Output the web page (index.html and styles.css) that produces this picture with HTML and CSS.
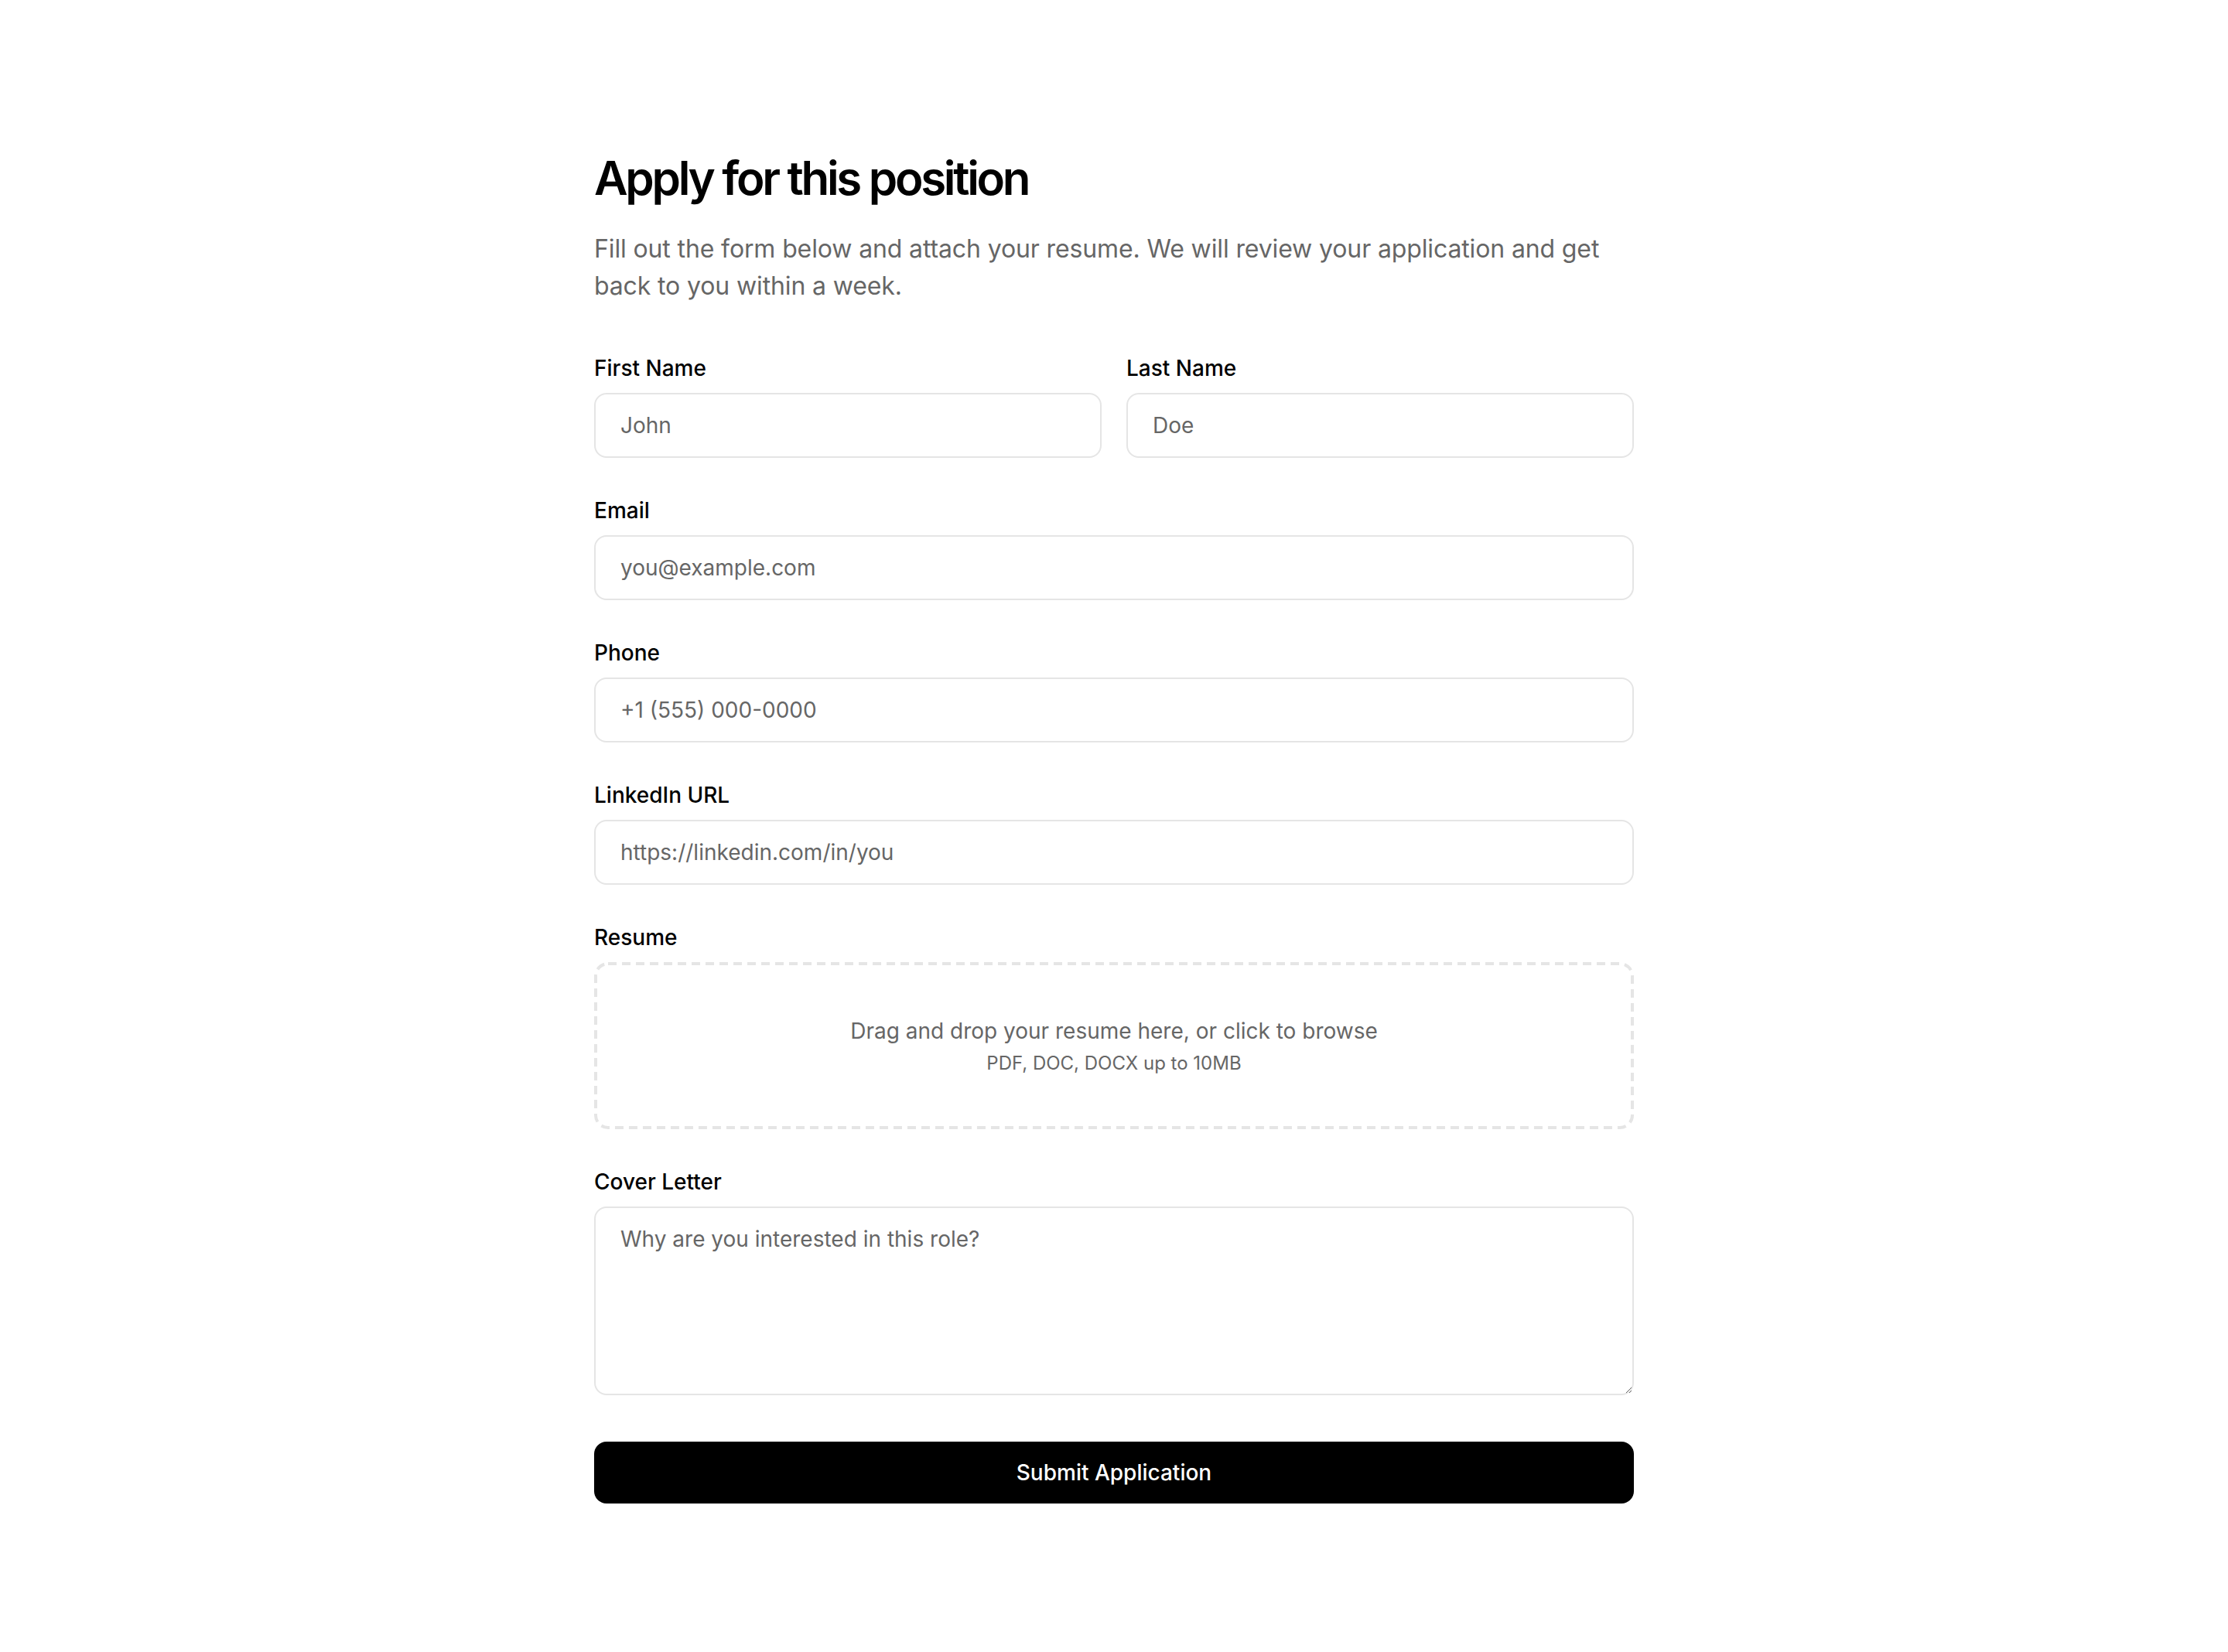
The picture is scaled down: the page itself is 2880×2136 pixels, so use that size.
FILE: index.html
```html
<!DOCTYPE html>
<html lang="en">
<head>
  <meta charset="UTF-8" />
  <meta name="viewport" content="width=device-width, initial-scale=1.0" />
  <title>Apply for this position</title>
  <link rel="stylesheet" href="styles.css">
</head>
<body>
  <div class="container">
    <h1>Apply for this position</h1>
    <p class="description">Fill out the form below and attach your resume. We will review your application and get back to you within a week.</p>

    <form class="apply-form">
      <div class="row">
        <div class="field">
          <label for="firstName">First Name</label>
          <input type="text" id="firstName" placeholder="John" />
        </div>
        <div class="field">
          <label for="lastName">Last Name</label>
          <input type="text" id="lastName" placeholder="Doe" />
        </div>
      </div>

      <div class="field">
        <label for="email">Email</label>
        <input type="email" id="email" placeholder="you@example.com" />
      </div>

      <div class="field">
        <label for="phone">Phone</label>
        <input type="tel" id="phone" placeholder="+1 (555) 000-0000" />
      </div>

      <div class="field">
        <label for="linkedin">LinkedIn URL</label>
        <input type="url" id="linkedin" placeholder="https://linkedin.com/in/you" />
      </div>

      <div class="field">
        <label>Resume</label>
        <div class="dropzone">
          <svg class="dash" width="100%" height="100%" aria-hidden="true">
            <rect x="2" y="2" width="calc(100% - 4px)" height="calc(100% - 4px)" rx="16" ry="16" />
          </svg>
          <p class="drop-main">Drag and drop your resume here, or click to browse</p>
          <p class="drop-hint">PDF, DOC, DOCX up to 10MB</p>
        </div>
      </div>

      <div class="field">
        <label for="cover">Cover Letter</label>
        <textarea id="cover" rows="5" placeholder="Why are you interested in this role?"></textarea>
      </div>

      <button type="submit">Submit Application</button>
    </form>
  </div>
</body>
</html>
```

FILE: styles.css
```css
body {
  margin: 0;
  background: #fff;
  font-family: 'Inter', 'Noto Sans', sans-serif;
  color: #000;
}
.container {
  width: 1344px;
  margin: 0 auto;
  padding: 194px 0 160px;
}
h1 {
  font-size: 60px;
  line-height: 72px;
  font-weight: 600;
  letter-spacing: -0.055em;
  margin: 0 0 32px;
}
p.description {
  font-size: 32px;
  line-height: 48px;
  letter-spacing: -0.004em;
  color: #666;
  margin: 0 0 62px;
}
.apply-form {
  display: flex;
  flex-direction: column;
  gap: 48px;
}
.row {
  display: grid;
  grid-template-columns: 1fr 1fr;
  gap: 32px;
}
.field {
  display: flex;
  flex-direction: column;
}
label {
  font-size: 28px;
  line-height: 40px;
  font-weight: 500;
  margin-bottom: 12px;
}
input,
textarea {
  font-family: inherit;
  font-size: 28px;
  line-height: 40px;
  color: #000;
  padding: 20px 32px;
  border: 2px solid #e5e5e5;
  border-radius: 16px;
  background: #fff;
  outline: none;
  margin: 0;
}
input::placeholder,
textarea::placeholder {
  color: #666;
}
textarea {
  display: block;
  resize: vertical;
}
.dropzone {
  position: relative;
  padding: 69px 36px;
  text-align: center;
  cursor: pointer;
}
.dash {
  position: absolute;
  top: 0;
  left: 0;
  pointer-events: none;
}
.dash rect {
  fill: none;
  stroke: #e5e5e5;
  stroke-width: 4;
  stroke-dasharray: 11 7;
}
.drop-main {
  margin: 0;
  font-size: 28px;
  line-height: 40px;
  color: #666;
}
.drop-hint {
  margin: 6px 0 0;
  font-size: 24px;
  line-height: 32px;
  color: #666;
}
button {
  margin-top: 12px;
  height: 80px;
  font-family: inherit;
  font-size: 28px;
  font-weight: 500;
  color: #fff;
  background: #000;
  border: none;
  border-radius: 16px;
  cursor: pointer;
}
```
